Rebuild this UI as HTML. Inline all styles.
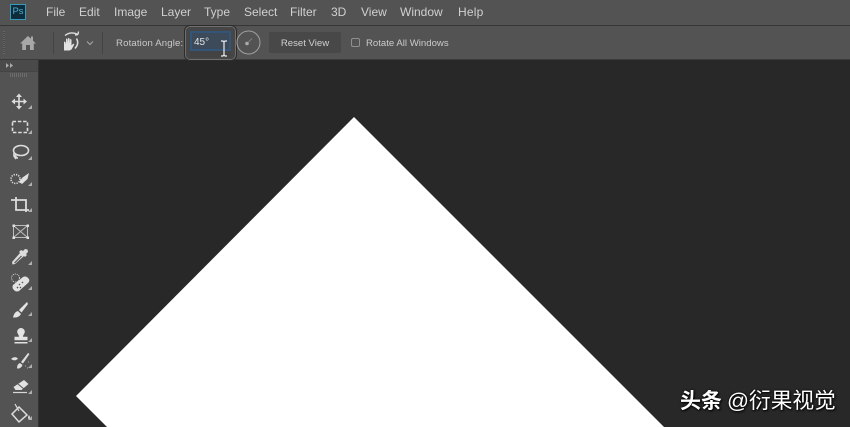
<!DOCTYPE html>
<html><head><meta charset="utf-8"><style>
*{box-sizing:border-box}
html,body{margin:0;padding:0;background:#282828}
body{width:850px;height:427px;position:relative;overflow:hidden;font-family:"Liberation Sans","Noto Sans CJK SC",sans-serif;color:#d4d4d4}
.a{position:absolute}
.m{position:absolute;top:5px;font-size:12px;line-height:14px;color:#d0d0d0;white-space:nowrap}
.o{position:absolute;font-size:9.6px;line-height:12px;color:#cacaca;white-space:nowrap}
</style></head><body>
<div class="a" style="left:0;top:0;width:850px;height:25px;background:#535353"></div>
<div class="a" style="left:0;top:25px;width:850px;height:1px;background:#363636"></div>
<div class="a" style="left:0;top:26px;width:850px;height:33px;background:#535353"></div>
<div class="a" style="left:0;top:59px;width:850px;height:1px;background:#3a3a3a"></div>
<div class="a" style="left:0;top:60px;width:38px;height:367px;background:#535353"></div>
<div class="a" style="left:0;top:60px;width:38px;height:12px;background:#4a4a4a"></div>
<div class="a" style="left:38px;top:60px;width:1px;height:367px;background:#333"></div>
<div class="a" style="left:0;top:71px;width:38px;height:1px;background:#444"></div>

<div class="a" style="left:10px;top:4px;width:16px;height:16px;background:#0f2c3b;border:1px solid #3a98b8;color:#4fb0d0;font-size:9.5px;line-height:14px;text-align:center">Ps</div>
<div class="m" style="left:46px">File</div>
<div class="m" style="left:79px">Edit</div>
<div class="m" style="left:114px">Image</div>
<div class="m" style="left:161px">Layer</div>
<div class="m" style="left:204px">Type</div>
<div class="m" style="left:244px">Select</div>
<div class="m" style="left:290px">Filter</div>
<div class="m" style="left:331px">3D</div>
<div class="m" style="left:361px">View</div>
<div class="m" style="left:400px">Window</div>
<div class="m" style="left:458px;letter-spacing:.2px">Help</div>

<div class="a" style="left:3px;top:31px;width:2px;height:23px;background:repeating-linear-gradient(#666 0 1px,#484848 1px 2px)"></div>
<svg class="a" style="left:0;top:26px;filter:blur(.25px)" width="120" height="33" viewBox="0 0 120 33">
<path d="M20 17.500 28 10l3 2.800V10.500h2v4.200L36 17.500h-2.200V24H30V19h-4v5h-3.800v-6.500z" fill="#a8a8a8"/>
<rect x="53" y="6" width="1" height="22" fill="#444"/>
<rect x="102" y="6" width="1" height="22" fill="#444"/>
<path d="M64 23.500V15.500l1.500.5.500 2.500V12.500l1.500.3.500 4.200V12l1.500.2.500 4.800V13l1.500.5v6l1.800-2 1 1-2.800 5-2 1h-5.500z" fill="#e2e2e2"/>
<path d="M65 9.500Q71 5 78 8.500M78 8.500l.5-3M78 8.500l-3 .5" fill="none" stroke="#ddd" stroke-width="1.400"/>
<path d="M76.500 12.500q3 5 -1.500 10" fill="none" stroke="#ddd" stroke-width="1.500"/>
<path d="M87 15.500l3 3 3-3" fill="none" stroke="#aaa" stroke-width="1"/>
</svg>
<div class="o" style="left:116px;top:38px;letter-spacing:.15px">Rotation Angle:</div>

<div class="a" style="left:184px;top:25px;width:53px;height:36px;background:#464646;border:1px solid #2c2c2c;border-radius:6px;box-shadow:0 0 0 1px #6f6f6f inset"></div>
<div class="a" style="left:190px;top:31px;width:41px;height:20px;background:#3c4a5a;border:2px solid #34557a"></div>
<div class="a" style="left:190px;top:51px;width:41px;height:6px;background:#434343"></div>
<div class="a" style="left:194px;top:37px;font-size:10px;line-height:12px;color:#e2e2e2">45°</div>
<svg class="a" style="left:218px;top:40px" width="12" height="18" viewBox="0 0 12 18"><path d="M3 1h2l1 1 1-1h2M6 2v13M3 16h2l1-1 1 1h2" fill="none" stroke="#eee" stroke-width="1.200"/></svg>

<svg class="a" style="left:235px;top:29px" width="27" height="27" viewBox="0 0 27 27"><circle cx="13.500" cy="13.500" r="11.500" fill="none" stroke="#a0a0a0" stroke-width="1"/><circle cx="12" cy="14.500" r="1.800" fill="#aaa"/><path d="M13 13.500l4-4" stroke="#808080"/></svg>

<div class="a" style="left:269px;top:32px;width:72px;height:21px;background:#484848;border-radius:2px;color:#d0d0d0;font-size:9.600px;line-height:23px;text-align:center">Reset View</div>
<div class="a" style="left:351px;top:38px;width:9px;height:9px;border:1px solid #8f8f8f;border-radius:2px"></div>
<div class="o" style="left:366px;top:38px">Rotate All Windows</div>

<svg class="a" style="left:0;top:60px;filter:blur(.3px)" width="38" height="367" viewBox="0 0 38 367">
<path d="M6 3l3 2.500L6 8zM10 3l3 2.500L10 8z" fill="#aaa"/>
<path d="M10 15h17" stroke="#6b6b6b" stroke-width="4" stroke-dasharray="1 1"/>
<g fill="#b0b0b0">
<path d="M32 45v4h-4zM32 70v4h-4zM32 96v4h-4zM32 122v4h-4zM32 148v4h-4zM32 201v4h-4zM32 226v4h-4zM32 252v4h-4zM32 278v4h-4zM32 304v4h-4zM32 330v4h-4zM32 356v4h-4z"/>
</g>
<g fill="none" stroke="#dcdcdc" stroke-width="1.600">
<path d="M19 35v13M13 41.500h13"/>
<path d="M19 33.500l-3 3.500h6zM19 49.500l-3-3.500h6zM11.500 41.500l3.500-3v6zM27 41.500l-3.500-3v6z" fill="#dcdcdc" stroke="none"/>
<rect x="12.500" y="61.500" width="15" height="11" stroke-dasharray="3.500 1.800"/>
<ellipse cx="21" cy="90.500" rx="7.500" ry="5"/>
<path d="M14 93v3l2 3M16 94c-1 2 0 4 2 4"/>
<circle cx="15.500" cy="119" r="4.500" stroke-dasharray="1.200 1.200"/>
</g>
<path d="M29 113l-1.500 6-5.500 5-3-2 3.500-4.500z" fill="#e0e0e0"/>
<g fill="none" stroke="#dcdcdc" stroke-width="1.800">
<path d="M11 140h15v12M16 137v13h13"/>
</g>
<g fill="none" stroke="#bcbcbc" stroke-width="1">
<rect x="13.500" y="165.500" width="14" height="12"/><path d="M13.500 165.500l14 12M27.500 165.500l-14 12"/>
</g>
<path d="M12.500 164.500h2.500v2.500h-2.500zM26.500 164.500h2.500v2.500h-2.500zM12.500 176.500h2.500v2.500h-2.500zM26.500 176.500h2.500v2.500h-2.500z" fill="#e0e0e0"/>
<path d="M23 191l2-2 2.500.5.500 2.500-2 2 1 1-2 2-1-1-9 8-2.500.5-.5-2.500 8-9-1-1 2-2z" fill="#dcdcdc"/>
<path d="M21.500 196l-7 7" stroke="#555" stroke-width="1.200"/>
<path d="M13 225l10-8q2-1 4 0l2 2q1 2-1 4l-9 8q-2 1-4 0l-2-2q-1-2 0-4z" fill="#e2e2e2"/>
<path d="M19 224l1 1M22 222l1 1M17 227l1 1M20 227l1 1" stroke="#555" stroke-width="1.400"/>
<circle cx="15.500" cy="218" r="4" fill="none" stroke="#d8d8d8" stroke-dasharray="1 1"/>
<path d="M27 242l-8 8 2.500 2.500 6.500-8.500zM18 251q-4 1-5 6.500 6 .5 8-3.500z" fill="#e4e4e4"/>
<path d="M21 268a3.800 3.800 0 0 1 3.800 3.800c0 2-1.800 3-1.800 5h4.500v3.500H14.500v-3.500H19c0-2-1.800-3-1.800-5A3.800 3.800 0 0 1 21 268zM14.500 282h13v1.500h-13z" fill="#e2e2e2"/>
<path d="M28 293l-7 9 2 1.500 6.500-9.500zM20 303q-3 1-3 5.500 4 .5 5.500-3.500zM11 299q4-3.500 7-.5-3 3.500-7 .5z" fill="#dedede"/>
<path d="M25 306h1M28 302h1M27 308h1" stroke="#aaa"/>
<path d="M24 320l4.500 4-7 6h-6l-2-3z" fill="#e2e2e2"/><path d="M18 324l6 5" stroke="#555"/><path d="M13 332.500h14" stroke="#d8d8d8" stroke-width="1.200"/>
<path d="M19 347l8 8-8 7-7-8z" fill="none" stroke="#dcdcdc" stroke-width="1.500"/><path d="M15 344l4 7" stroke="#dcdcdc" stroke-width="1.200"/><path d="M29 355q2 3 0 4.500-2-1.500 0-4.500z" fill="#dcdcdc"/>
</svg>

<svg class="a" style="left:0;top:0" width="850" height="427" viewBox="0 0 850 427"><path d="M354 117L664 427H107L76 396z" fill="#fff"/></svg>

<div class="a" style="left:680px;top:387px;line-height:28px;color:#fff;white-space:nowrap;text-shadow:1px 1px 2px #000,0 0 2px #000"><span style="font-size:21px;font-weight:700">头条</span><span style="font-size:21.700px;font-weight:400;margin-left:5px">@衍果视觉</span></div>
</body></html>
